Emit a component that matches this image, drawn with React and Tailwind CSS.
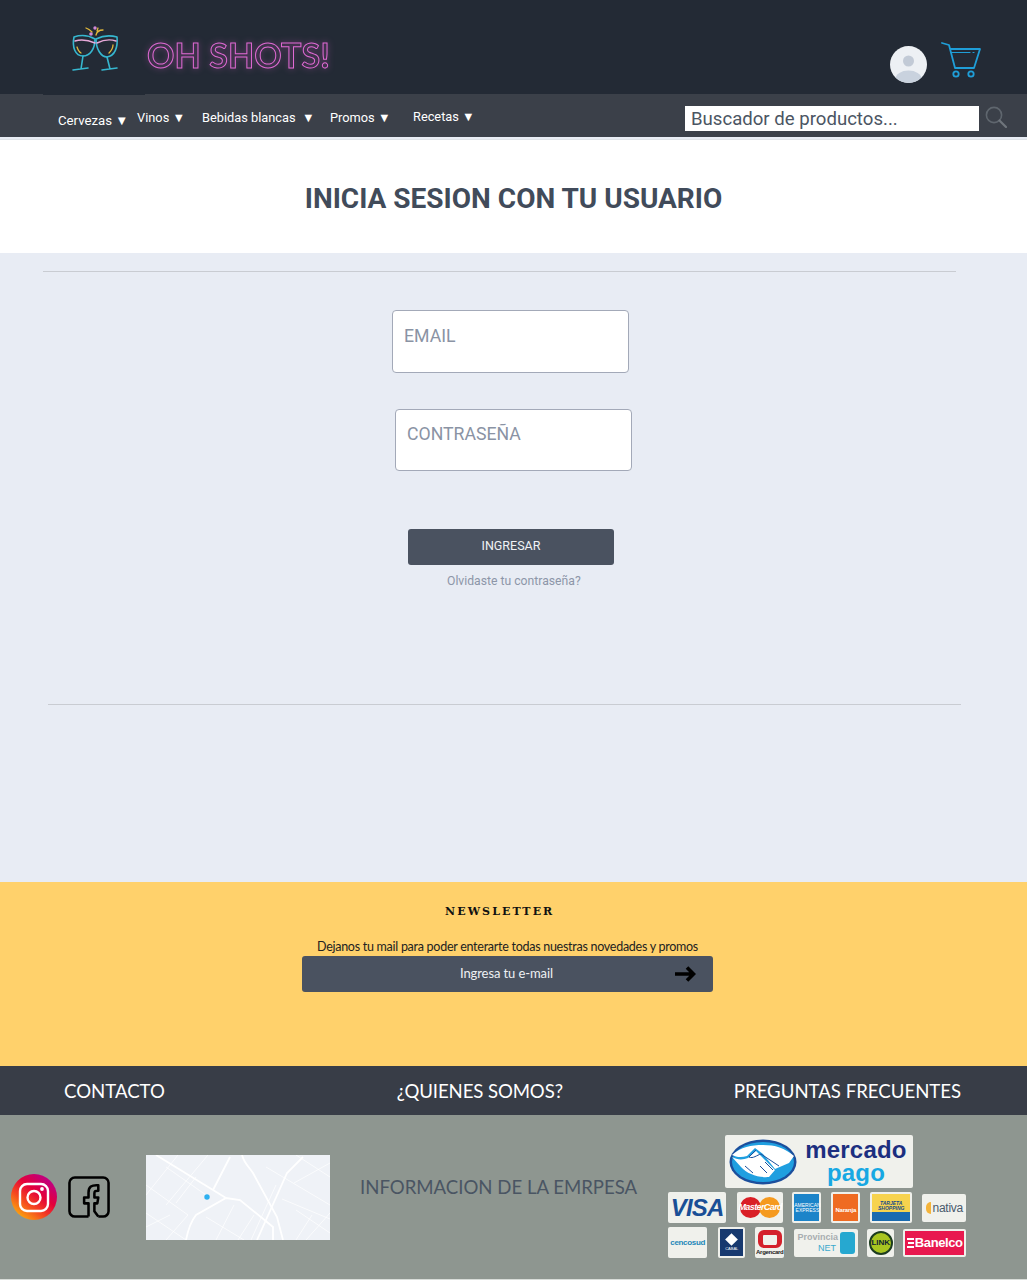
const navItems = [
  { label: 'Cervezas', cls: 'w-[79px] ml-[58px] mt-[17px] text-[13.2px]' },
  { label: 'Vinos', cls: 'w-[65px] mt-[14px]' },
  { label: 'Bebidas blancas ', cls: 'w-[128px] mt-[14px]' },
  { label: 'Promos', cls: 'w-[83px] mt-[14px]' },
  { label: 'Recetas', cls: 'w-[80px] mt-[13px]' },
];

function Logo() {
  return (
    <svg width="52" height="50" viewBox="0 0 52 50" fill="none" strokeLinecap="round" strokeLinejoin="round">
      <path d="M4 12 C2 22 5 31 13 31 C20 31 25 24 25 14 C18 10 10 10 4 12Z" stroke="#36b7cf" strokeWidth="1.6" />
      <path d="M26 14 C26 24 31 32 37 32 C45 31 48 22 47 12 C40 10 32 11 26 14Z" stroke="#36b7cf" strokeWidth="1.6" />
      <path d="M5 16 C12 14 18 15 25 18 M27 18 C33 15 40 14 46 16" stroke="#e7a9d9" strokeWidth="1.4" />
      <path d="M13 31 L11 44 M37 32 L40 44 M3 45 L18 43 M32 45 L47 43" stroke="#36b7cf" strokeWidth="1.6" />
      <path d="M7 22 C8 25 9 27 11 28 M43 20 C43 23 41 26 39 28" stroke="#e2b93b" strokeWidth="1.3" />
      <path d="M16 3 C19 4 21 6 22 7 M33 5 C29 5 27 6 26 10 M28 3 L27 6" stroke="#e2b93b" strokeWidth="1.3" />
      <circle cx="25" cy="3" r="1.7" fill="#d08ad6" />
      <circle cx="21" cy="9" r="1.8" fill="#d08ad6" />
    </svg>
  );
}

function UserAvatar() {
  return (
    <svg width="37" height="37" viewBox="0 0 37 37">
      <defs>
        <clipPath id="avatar-clip"><circle cx="18.5" cy="18.5" r="18.5" /></clipPath>
      </defs>
      <circle cx="18.5" cy="18.5" r="18.5" fill="#edf0f4" />
      <g clipPath="url(#avatar-clip)">
        <circle cx="18.5" cy="15" r="5.5" fill="#c2cad6" />
        <ellipse cx="18.5" cy="33" rx="13" ry="8.5" fill="#c9d2de" />
      </g>
    </svg>
  );
}

function Cart() {
  return (
    <svg width="40" height="36" viewBox="0 0 40 36" fill="none" stroke="#1f9ed8" strokeWidth="1.8" strokeLinecap="round" strokeLinejoin="round">
      <path d="M1 1 L8 3 L14 26 L33 26 L39 7 L9 7" />
      <path d="M10 10.5 L29 10.5 M32 10.5 L33 10.5" strokeWidth="1.2" />
      <circle cx="15" cy="32" r="2.7" />
      <circle cx="30" cy="32" r="2.7" />
    </svg>
  );
}

function SearchIcon() {
  return (
    <svg width="22" height="22" viewBox="0 0 22 22" fill="none" stroke="#5f666e" strokeWidth="1.6" strokeLinecap="round">
      <circle cx="9" cy="9" r="7.6" />
      <path d="M14.5 14.5 L21 21" strokeWidth="2.2" stroke="#6f757c" />
    </svg>
  );
}

function Instagram() {
  return (
    <svg width="46" height="46" viewBox="0 0 46 46" fill="none">
      <defs>
        <linearGradient id="ig" x1="0.1" y1="1" x2="0.9" y2="0">
          <stop offset="0" stopColor="#fdc30a" />
          <stop offset="0.35" stopColor="#f5481f" />
          <stop offset="0.6" stopColor="#e4003a" />
          <stop offset="1" stopColor="#b1009c" />
        </linearGradient>
      </defs>
      <circle cx="23" cy="23" r="23" fill="url(#ig)" />
      <rect x="9" y="10" width="28" height="27" rx="7" stroke="#fff" strokeWidth="2.4" />
      <circle cx="23" cy="23.5" r="6.5" stroke="#fff" strokeWidth="2.4" />
      <circle cx="31" cy="15" r="1.9" fill="#fff" />
    </svg>
  );
}

function Facebook() {
  return (
    <svg width="43" height="43" viewBox="0 0 44 44" fill="none" stroke="#000" strokeWidth="2.6" strokeLinejoin="round">
      <path d="M21 41.5 H7 a5.5 5.5 0 0 1 -5.5 -5.5 V7 A5.5 5.5 0 0 1 7 1.5 H36 a5.5 5.5 0 0 1 5.5 5.5 V36 a5.5 5.5 0 0 1 -5.5 5.5 H31" />
      <path d="M21 41.5 V28 H16.5 V22 H21 V17 C21 11 24 9 31 9.5 V15 C27.5 15 27 15.5 27 18 V22 H31 L30 28 H27 V36 L31 41.5" />
    </svg>
  );
}

function MapThumb() {
  const mainRoads = [
    'M10 0 L80 43',
    'M40 85 C42 75 46 65 50 60 L80 43 L94 45 L127 72 L127 85',
    'M96 0 C98 8 103 12 107 18 L131 62 L137 85',
    'M84 2 L67 35',
    'M157 2 L141 18 L111 85',
  ];
  const sideRoads = [
    'M0 30 L42 60 L20 85', 'M32 0 L0 40', 'M62 0 L20 50', 'M0 58 L40 85', 'M150 0 L184 22',
    'M120 12 L184 50', 'M150 55 L184 78', 'M130 30 L105 85', 'M60 62 L98 85', 'M160 85 L184 58',
    'M20 12 L60 40', 'M50 22 L30 48', 'M88 50 L70 85', 'M108 60 L92 85', 'M148 28 L184 8',
    'M136 44 L184 64', 'M166 60 L150 85', 'M0 72 L24 60',
  ];
  return (
    <svg width="184" height="85" viewBox="0 0 184 85" className="bg-[#eff2f7]">
      {sideRoads.map((d) => (
        <path key={d} d={d} fill="none" stroke="#fff" strokeWidth="1" strokeOpacity="0.7" />
      ))}
      {mainRoads.map((d) => (
        <path key={d} d={d} fill="none" stroke="#fff" strokeWidth="1.8" />
      ))}
      <circle cx="61" cy="42" r="2.7" fill="#2eb0f0" />
    </svg>
  );
}

function Handshake() {
  return (
    <svg width="68" height="46" viewBox="0 0 68 46">
      <ellipse cx="34" cy="23" rx="33.5" ry="22.5" fill="#1c4f9c" />
      <ellipse cx="34" cy="23" rx="31" ry="20" fill="#1f9fe0" />
      <path d="M3 16 C12 8 22 6 34 6 C46 6 56 9 65 17 L60 24 L46 30 L34 15 L26 9 L18 17 C12 19 7 18 3 16Z" fill="#fff" />
      <path d="M3 18 C8 21 14 21 19 19 L27 12 L46 31 L40 38 C30 39 18 35 12 28Z" fill="#fff" />
      <path d="M27 11 L20 18 C24 20 28 16 32 15 L50 27 M36 23 L44 31 M31 27 L38 34 M16 27 L24 34" fill="none" stroke="#1c4f9c" strokeWidth="1" />
    </svg>
  );
}

function Chip({ cls = '', children }) {
  return <div className={`flex items-center justify-center rounded-[2px] bg-[#f0f1ec] overflow-hidden shrink-0 ${cls}`}>{children}</div>;
}

function PaymentLogos() {
  return (
    <div className="flex flex-col items-start w-[298px] ml-[31px] -mt-[1px]">
      <div className="flex items-center gap-[8px] ml-[57px] w-[188px] h-[53px] pl-[4px] rounded-[2px] bg-[#f0f1ec] font-['Liberation_Sans',sans-serif] font-bold">
        <Handshake />
        <div className="flex flex-col items-center leading-[23px] -mt-[1px]">
          <span className="text-[24px] tracking-[0.2px] text-[#1c2f80]">mercado</span>
          <span className="text-[24px] tracking-[0.2px] text-[#17a8e3]">pago</span>
        </div>
      </div>
      <div className="flex items-center w-full mt-[4px] font-['Liberation_Sans',sans-serif]">
        <Chip cls="w-[58px] h-[31px]"><span className="text-[24px] italic font-bold tracking-[-0.8px] text-[#1a4f96]">VISA</span></Chip>
        <Chip cls="w-[46px] h-[31px] ml-[11px] relative">
          <span className="absolute left-[3px] w-[21px] h-[21px] rounded-full bg-[#d91f26]" />
          <span className="absolute right-[3px] w-[21px] h-[21px] rounded-full bg-[#f59a1f]" />
          <span className="relative text-[9px] italic font-bold tracking-[-0.6px] text-white">MasterCard</span>
        </Chip>
        <Chip cls="w-[29px] h-[31px] ml-[9px] p-[2px]">
          <div className="w-full h-full bg-[#1c84c9] flex items-center text-center text-[5px] leading-[5px] text-white">AMERICAN EXPRESS</div>
        </Chip>
        <Chip cls="w-[29px] h-[31px] ml-[10px] p-[2px]">
          <div className="w-full h-full bg-[#ef6b22] flex items-end justify-center text-[6px] font-bold tracking-[-0.2px] text-white pb-[6px]">Naranja</div>
        </Chip>
        <Chip cls="w-[42px] h-[31px] ml-[10px] p-[2px]">
          <div className="w-full h-full flex flex-col">
            <div className="h-[7px] bg-[#f7d34e]" />
            <div className="flex-1 bg-[#f7d34e] text-[5px] leading-[5px] font-bold italic text-[#134a8c] text-center">TARJETA SHOPPING</div>
            <div className="h-[9px] bg-[#1a6bb0]" />
          </div>
        </Chip>
        <Chip cls="w-[44px] h-[28px] ml-[10px] gap-[2px]">
          <span className="w-[5px] h-[12px] rounded-l-full bg-[#f4b43a]" />
          <span className="text-[12px] text-[#4a5a6c] tracking-[-0.3px]">nativa</span>
        </Chip>
      </div>
      <div className="flex items-center w-full mt-[4px] font-['Liberation_Sans',sans-serif]">
        <Chip cls="w-[39px] h-[31px]"><span className="text-[8px] font-bold tracking-[-0.3px] text-[#1d87b8]">cencosud</span></Chip>
        <Chip cls="w-[27px] h-[31px] ml-[11px] p-[2px]">
          <div className="w-full h-full bg-[#17396f] flex flex-col items-center justify-center">
            <span className="w-[9px] h-[9px] rotate-45 bg-white" />
            <span className="mt-[3px] text-[4px] leading-[4px] text-white">CABAL</span>
          </div>
        </Chip>
        <Chip cls="w-[29px] h-[31px] ml-[10px] flex-col">
          <span className="w-[24px] h-[18px] rounded-[6px] border-[5px] border-b-[3px] border-[#d4202b]" />
          <span className="text-[6px] leading-[8px] font-bold tracking-[-0.3px] text-[#222]">Argencard</span>
        </Chip>
        <Chip cls="w-[64px] h-[28px] ml-[10px] gap-[2px]">
          <div className="flex flex-col items-end text-[9px] leading-[11px] font-bold">
            <span className="text-[#a8adb0]">Provincia</span>
            <span className="text-[#3ba9cc] font-normal pr-[2px]">NET</span>
          </div>
          <span className="w-[15px] h-[22px] rounded-[3px] bg-[#26a8d0]" />
        </Chip>
        <Chip cls="w-[27px] h-[28px] ml-[9px]">
          <span className="flex items-center justify-center w-[24px] h-[24px] rounded-full bg-[#a8c520] border-[2px] border-[#1c3c20] text-[8px] font-bold text-[#123]">LINK</span>
        </Chip>
        <Chip cls="w-[63px] h-[28px] ml-[9px] p-[2px]">
          <div className="w-full h-full flex items-center justify-center gap-[1px] bg-[#e8194f] text-white text-[13px] font-bold tracking-[-0.4px]">
            <svg width="7" height="10" viewBox="0 0 7 10" fill="#fff"><rect y="0" width="7" height="2" /><rect x="1" y="4" width="6" height="2" /><rect y="8" width="7" height="2" /></svg>
            Banelco
          </div>
        </Chip>
      </div>
    </div>
  );
}

export default function App() {
  return (
    <div className="w-[1027px] h-[1280px] flex flex-col font-['Roboto',sans-serif] bg-[#e8ecf4]">
      <header className="h-[94px] bg-[#232a35] flex shrink-0">
        <div className="pl-[70px] pt-[25px] w-[147px]"><Logo /></div>
        <div className="pt-[33px] w-[676px] text-[34px] leading-[44px] font-['Lato',sans-serif] font-bold tracking-[0.1px] text-transparent [-webkit-text-stroke:1px_#e06ad4] drop-shadow-[0_0_3px_rgba(214,94,200,0.7)]">
          OH SHOTS!
        </div>
        <div className="pt-[46px] ml-[67px]"><UserAvatar /></div>
        <div className="pt-[42px] ml-[14px]"><Cart /></div>
      </header>

      <nav className="relative h-[43px] bg-[#3b4049] flex shrink-0 text-[12.8px] text-white leading-[20px]">
        <span className="absolute left-[43px] top-0 w-[102px] h-[1px] bg-[#232a35]" />
        {navItems.map((item) => (
          <div key={item.label} className={`shrink-0 whitespace-pre ${item.cls}`}>{item.label} ▼</div>
        ))}
        <div className="ml-[192px] mt-[12px] w-[294px] h-[25px] bg-white text-[18.6px] leading-[27px] pl-[6px] text-[#4b5563]">Buscador de productos...</div>
        <div className="ml-[6px] mt-[12px]"><SearchIcon /></div>
      </nav>

      <div className="h-[114px] bg-white border-t border-[#dfe3e8] mt-[2px] shrink-0 flex justify-center">
        <h1 className="mt-[41px] text-[28px] leading-[36px] font-bold text-[#414b5a]">INICIA SESION CON TU USUARIO</h1>
      </div>

      <main className="h-[629px] shrink-0 flex flex-col">
        <hr className="ml-[43px] mt-[18px] w-[913px] border-t border-[#c9ccd2]" />
        <div className="ml-[392px] mt-[38px] w-[237px] h-[63px] rounded-[4px] border border-[#a3a9b8] bg-white pl-[11px] pt-[13px] text-[17.7px] leading-[24px] text-[#8a93a4]">EMAIL</div>
        <div className="ml-[395px] mt-[36px] w-[237px] h-[62px] rounded-[4px] border border-[#a3a9b8] bg-white pl-[11px] pt-[12px] text-[17.7px] leading-[24px] text-[#8a93a4]">CONTRASEÑA</div>
        <button className="ml-[408px] mt-[58px] w-[206px] h-[36px] rounded-[3px] bg-[#4a5260] text-[12.5px] text-[#f0f2f5] pb-[2px]">INGRESAR</button>
        <div className="ml-[447px] mt-[8px] text-[12.2px] leading-[16px] text-[#8d96a8]">Olvidaste tu contraseña?</div>
        <hr className="ml-[48px] mt-[115px] w-[913px] border-t border-[#c9ccd2]" />
      </main>

      <section className="h-[184px] bg-[#ffd16b] shrink-0 flex flex-col items-start">
        <div className="ml-[445px] mt-[23px] text-[11px] leading-[14px] font-bold tracking-[2.1px] text-[#111] font-['DejaVu_Serif',serif]">NEWSLETTER</div>
        <p className="ml-[317px] mt-[20px] text-[12.5px] leading-[16px] tracking-[-0.27px] font-['Lato',sans-serif] text-[#222]">Dejanos tu mail para poder enterarte todas nuestras novedades y promos</p>
        <div className="ml-[302px] mt-[1px] w-[411px] h-[36px] rounded-[3px] bg-[#4a5260] flex items-center font-['Lato',sans-serif] text-[13px] tracking-[-0.1px] text-[#eef0f3]">
          <span className="ml-[158px]">Ingresa tu e-mail</span>
          <svg width="21" height="16" viewBox="0 0 21 16" fill="none" stroke="#000" strokeWidth="3.6" className="ml-auto mr-[17px]">
            <path d="M0 8 H18 M12 1.5 L18.5 8 L12 14.5" />
          </svg>
        </div>
      </section>

      <div className="h-[49px] pt-[2px] bg-[#383d47] shrink-0 flex items-center font-['Lato',sans-serif] text-[18.6px] text-white">
        <span className="ml-[64px]">CONTACTO</span>
        <span className="ml-[232px] tracking-[-0.1px]">¿QUIENES SOMOS?</span>
        <span className="ml-[171px]">PREGUNTAS FRECUENTES</span>
      </div>

      <footer className="flex-1 bg-[#8e9690] flex items-center border-b border-[#d8dcd8]">
        <div className="ml-[11px]"><Instagram /></div>
        <div className="ml-[11px]"><Facebook /></div>
        <div className="ml-[35px]"><MapThumb /></div>
        <div className="ml-[30px] mt-[-18px] font-['Lato',sans-serif] text-[18.6px] text-[#4a5563] whitespace-nowrap">INFORMACION DE LA EMRPESA</div>
        <PaymentLogos />
      </footer>
    </div>
  );
}
